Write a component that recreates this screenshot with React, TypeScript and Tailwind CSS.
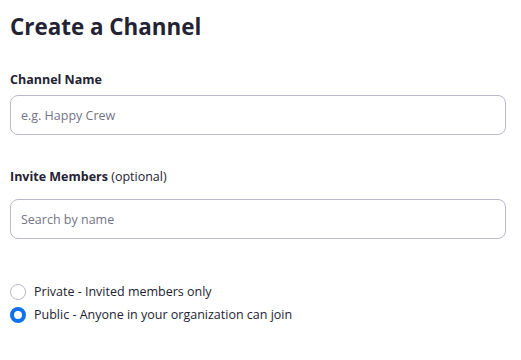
import React, { useState } from 'react'

export default function App() {
  const [visibility, setVisibility] = useState<'private' | 'public'>('public')

  return (
    <div className="w-[521px] h-[360px] bg-white px-[10px] pt-[11px] text-[#232333]" style={{ fontFamily: '"Open Sans", "Noto Sans", sans-serif' }}>
      <h1 className="text-[22.4px] font-bold leading-[32px]">Create a Channel</h1>

      <label className="block mt-[28px] text-[12.5px] font-bold leading-[18px]">Channel Name</label>
      <input
        className="mt-[6px] block w-[496px] h-[40px] rounded-[8px] border border-[#babacc] px-[10px] text-[12.5px] outline-none placeholder:text-[#747487]"
        placeholder="e.g. Happy Crew"
      />

      <label className="block mt-[33px] text-[12.5px] leading-[18px]">
        <span className="font-bold">Invite Members</span> (optional)
      </label>
      <input
        className="mt-[13px] block w-[496px] h-[40px] rounded-[8px] border border-[#babacc] px-[10px] text-[12.5px] outline-none placeholder:text-[#747487]"
        placeholder="Search by name"
      />

      <div className="mt-[44px] flex flex-col gap-[5px]">
        <RadioRow label="Private - Invited members only" checked={visibility === 'private'} onClick={() => setVisibility('private')} />
        <RadioRow label="Public - Anyone in your organization can join" checked={visibility === 'public'} onClick={() => setVisibility('public')} />
      </div>
    </div>
  )
}

function RadioRow({ label, checked, onClick }: { label: string; checked: boolean; onClick: () => void }) {
  return (
    <button onClick={onClick} className="flex items-center gap-[8px] text-left">
      <span
        className={`w-[16px] h-[16px] rounded-full box-border ${
          checked ? 'border-[4px] border-[#0e72ed] bg-white' : 'border border-[#babacc] bg-white'
        }`}
      />
      <span className="text-[12.5px] leading-[18px] text-[#232333]">{label}</span>
    </button>
  )
}
